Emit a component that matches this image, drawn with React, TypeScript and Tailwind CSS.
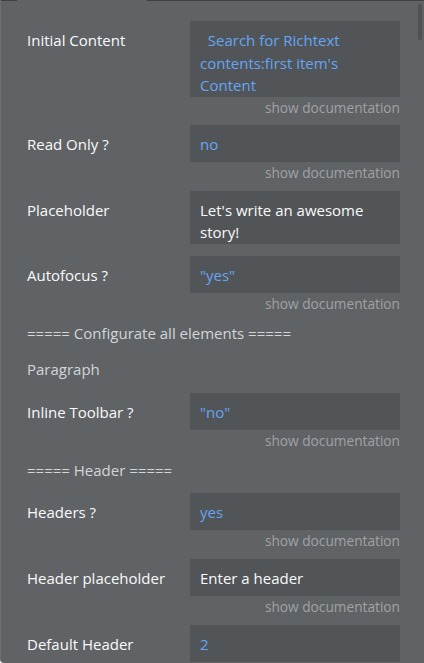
import type { ReactNode } from 'react';

interface FieldRowProps {
  label: string;
  children: ReactNode;
  blue?: boolean;
  doc?: boolean;
  className?: string;
}

function FieldRow({ label, children, blue = false, doc = true, className = '' }: FieldRowProps) {
  return (
    <div className={className}>
      <div className="grid grid-cols-[163px_210px]">
        <div className="pt-[8px] leading-[22.5px] text-[#fafafa]">{label}</div>
        <div
          className={
            'min-h-[37px] bg-[#515558] pt-[8px] pl-[10px] pr-[10px] leading-[22.5px] ' +
            (blue ? 'text-[#66a5f2]' : 'text-[#fafafa]')
          }
        >
          {children}
        </div>
      </div>
      {doc && (
        <div className="w-[373px] h-[20px] pt-[2px] text-right text-[13.7px] leading-[18px] text-[#a0a2a4]">
          show documentation
        </div>
      )}
    </div>
  );
}

export default function App() {
  return (
    <div className="relative h-[663px] overflow-hidden rounded-bl-[4px] border-l border-[#6c7073] bg-[#5f6366] font-['Open_Sans',sans-serif] text-[15px]">
      {/* top edge */}
      <div className="flex h-[1px]">
        <div className="w-[16px] bg-[#3f4245]" />
        <div className="w-[130px]" />
        <div className="flex-1 bg-[#3f4245]" />
      </div>

      {/* scrollbar thumb */}
      <div className="absolute right-[2px] top-[4px] h-[36px] w-[4px] rounded-[2px] bg-[#4e5255]" />

      <div className="pl-[26px] pt-[20px]">
        <FieldRow label="Initial Content" blue className="mb-[8px]">
          {'\u00a0\u00a0Search for Richtext contents:first item\'s Content'}
        </FieldRow>

        <FieldRow label="Read Only ?" blue className="mb-[9px]">
          no
        </FieldRow>

        <FieldRow label="Placeholder" doc={false} className="mb-[12px]">
          Let's write an awesome story!
        </FieldRow>

        <FieldRow label="Autofocus ?" blue className="mb-[9px]">
          "yes"
        </FieldRow>

        <div className="leading-[22px] text-[#d3d5d7]">===== Configurate all elements =====</div>
        <div className="mt-[14px] leading-[22px] text-[#d3d5d7]">Paragraph</div>

        <FieldRow label="Inline Toolbar ?" blue className="mt-[13px] mb-[9px]">
          "no"
        </FieldRow>

        <div className="mt-[2px] leading-[22px] text-[#d3d5d7]">===== Header =====</div>

        <FieldRow label="Headers ?" blue className="mt-[12px] mb-[9px]">
          yes
        </FieldRow>

        <FieldRow label="Header placeholder" className="mb-[9px]">
          Enter a header
        </FieldRow>

        <FieldRow label="Default Header" blue doc={false}>
          2
        </FieldRow>
      </div>
    </div>
  );
}
